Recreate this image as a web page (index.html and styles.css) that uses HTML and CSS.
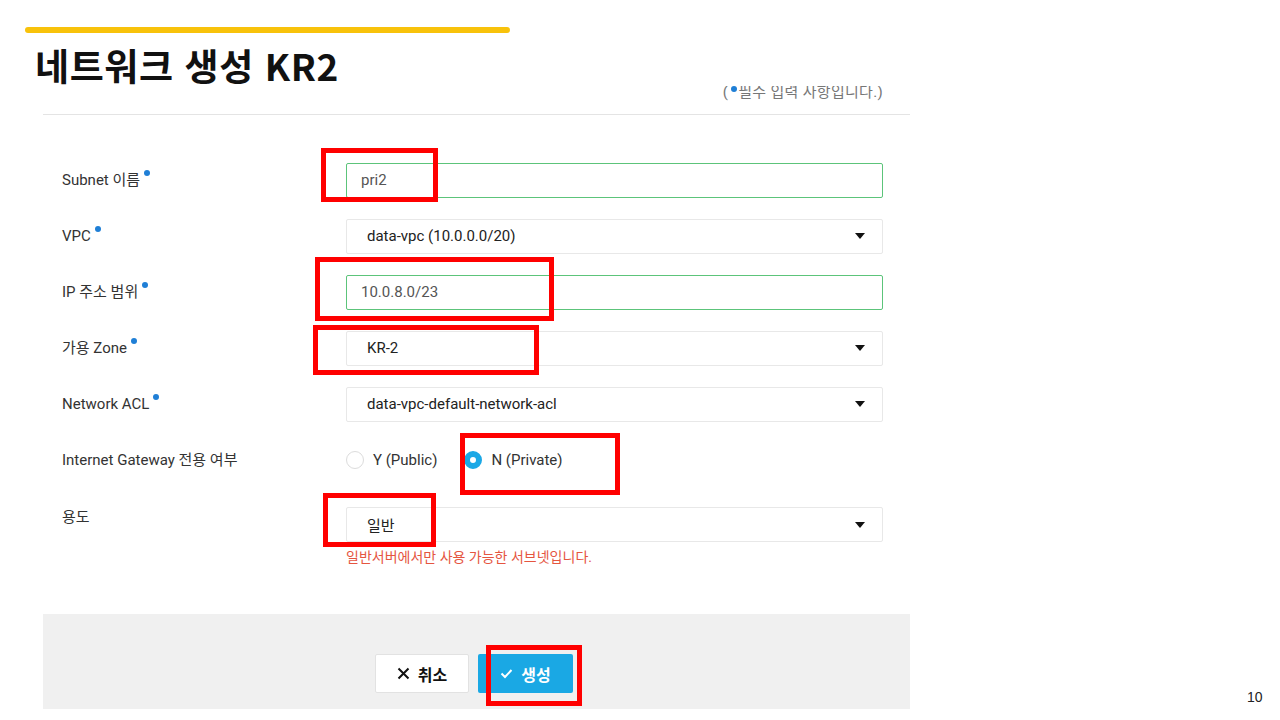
FILE: index.html
```html
<!DOCTYPE html>
<html lang="ko">
<head>
  <meta charset="UTF-8">
  <title>네트워크 생성 KR2</title>
  <meta name="viewport" content="width=device-width, initial-scale=1.0">
  <link rel="stylesheet" href="styles.css">
</head>
<body>
  <header class="slide-head">
    <div class="accent-bar"></div>
    <h1 class="slide-title">네트워크 생성 KR2</h1>
  </header>

  <section class="panel">
    <div class="required-note"><span>(<i class="dot"></i>필수 입력 사항입니다.)</span></div>

    <div class="form">
      <div class="row">
        <label class="label">Subnet 이름<i class="dot"></i></label>
        <div class="field input ok">pri2</div>
      </div>
      <div class="row">
        <label class="label">VPC<i class="dot"></i></label>
        <div class="field select">data-vpc (10.0.0.0/20)<span class="caret"></span></div>
      </div>
      <div class="row">
        <label class="label">IP 주소 범위<i class="dot"></i></label>
        <div class="field input ok">10.0.8.0/23</div>
      </div>
      <div class="row">
        <label class="label">가용 Zone<i class="dot"></i></label>
        <div class="field select">KR-2<span class="caret"></span></div>
      </div>
      <div class="row">
        <label class="label">Network ACL<i class="dot"></i></label>
        <div class="field select">data-vpc-default-network-acl<span class="caret"></span></div>
      </div>
      <div class="row">
        <label class="label">Internet Gateway 전용 여부</label>
        <div class="radios">
          <span class="radio"><span class="circle"></span>Y (Public)</span>
          <span class="radio checked"><span class="circle"></span>N (Private)</span>
        </div>
      </div>
      <div class="row top">
        <label class="label">용도</label>
        <div class="field-wrap">
          <div class="field select">일반<span class="caret"></span></div>
          <p class="hint">일반서버에서만 사용 가능한 서브넷입니다.</p>
        </div>
      </div>
    </div>

    <div class="footer">
      <button class="btn cancel">
        <svg width="13" height="13" viewBox="0 0 13 13"><path d="M1.5 1.5l10 10M11.5 1.5l-10 10" stroke="#111" stroke-width="2" fill="none"/></svg>
        취소
      </button>
      <button class="btn create">
        <svg width="13" height="11" viewBox="0 0 13 11"><path d="M1.5 5.5l3.5 3.5 6.5-7" stroke="#fff" stroke-width="2" fill="none"/></svg>
        생성
      </button>
    </div>
  </section>

  <!-- highlight marks -->
  <div class="mark" style="left:321px;top:148px;width:117px;height:54px"></div>
  <div class="mark" style="left:315px;top:257px;width:239px;height:64px"></div>
  <div class="mark" style="left:313px;top:325px;width:226px;height:50px"></div>
  <div class="mark" style="left:460px;top:433px;width:160px;height:62px"></div>
  <div class="mark" style="left:323px;top:493px;width:113px;height:54px"></div>
  <div class="mark" style="left:486px;top:645px;width:96px;height:61px"></div>

  <div class="page-num">10</div>
</body>
</html>
```

FILE: styles.css
```css
* {
  box-sizing: border-box;
}

body {
  margin: 0;
  width: 1280px;
  height: 720px;
  overflow: hidden;
  position: relative;
  background: #fff;
  color: #333;
  font-family: Roboto, "Noto Sans CJK KR", sans-serif;
}

.slide-head {
  padding: 27px 0 0 25px;
  height: 86px;
}

.accent-bar {
  width: 485px;
  height: 6px;
  border-radius: 3px;
  background: #f8c20b;
}

.slide-title {
  margin: 14px 0 0 10px;
  font-family: "Noto Sans CJK KR", sans-serif;
  font-size: 37px;
  font-weight: 700;
  line-height: 37px;
  letter-spacing: 0.6px;
  color: #111;
}

.panel {
  margin-left: 43px;
  width: 867px;
  overflow: hidden;
}

.dot {
  display: inline-block;
  width: 6px;
  height: 6px;
  border-radius: 50%;
  background: #1f7fd6;
  vertical-align: 9px;
  margin-left: 4px;
}

/* the note sits right under the title, its top edge trimmed by the panel */
.required-note {
  display: flex;
  justify-content: flex-end;
  align-items: flex-start;
  height: 29px;
  border-bottom: 1px solid #e4e4e4;
  padding-right: 27px;
  font-size: 15px;
  letter-spacing: 0.3px;
  color: #777;
}

.required-note span {
  line-height: 19px;
  margin-top: -3px;
}

.required-note .dot {
  margin: 0 1px 0 3px;
  vertical-align: 5px;
}

.form {
  padding: 37px 27px 0 19px;
}

.row {
  display: flex;
  align-items: center;
  height: 56px;
}

.row.top {
  align-items: flex-start;
  height: auto;
  padding-top: 19px;
}

.label {
  width: 284px;
  flex-shrink: 0;
  font-size: 15px;
  line-height: 20px;
  color: #333;
}

.field-wrap {
  flex: 1;
}

.field {
  flex: 1;
  height: 35px;
  display: flex;
  align-items: center;
  font-size: 15px;
  border-radius: 2px;
}

.input {
  padding-left: 14px;
  color: #555;
  border: 1px solid #d9d9d9;
}

.input.ok {
  border-color: #5cc47a;
}

.select {
  padding: 0 17px 0 20px;
  color: #222;
  border: 1px solid #e8e8e8;
  justify-content: space-between;
}

.caret {
  width: 0;
  height: 0;
  border-left: 5px solid transparent;
  border-right: 5px solid transparent;
  border-top: 6px solid #111;
}

.radios {
  display: flex;
  align-items: center;
  gap: 27px;
  font-size: 15px;
  color: #333;
}

.radio {
  display: flex;
  align-items: center;
  gap: 9px;
}

.circle {
  width: 18px;
  height: 18px;
  border-radius: 50%;
  border: 1px solid #dcdcdc;
  background: #fff;
}

.radio.checked .circle {
  border: 6px solid #1ba8e6;
}

.hint {
  margin: 7px 0 0;
  font-size: 14px;
  line-height: 17px;
  color: #e5553f;
}

.footer {
  margin-top: 48px;
  background: #f0f0f0;
  height: 95px;
  display: flex;
  justify-content: center;
  align-items: flex-start;
  gap: 9px;
  padding-top: 40px;
  padding-right: 5px;
}

.btn {
  height: 39px;
  display: flex;
  align-items: center;
  justify-content: center;
  gap: 8px;
  font-family: "Noto Sans CJK KR", sans-serif;
  font-size: 16px;
  font-weight: 700;
  border-radius: 2px;
  cursor: pointer;
}

.cancel {
  width: 94px;
  background: #fff;
  border: 1px solid #e2e2e2;
  color: #111;
}

.create {
  width: 95px;
  background: #1aa8e4;
  border: none;
  color: #fff;
}

.mark {
  position: absolute;
  border: 5px solid #f00;
}

.page-num {
  position: absolute;
  left: 1247px;
  top: 689px;
  font-size: 14px;
  color: #222;
  font-family: "Liberation Sans", sans-serif;
}
```
